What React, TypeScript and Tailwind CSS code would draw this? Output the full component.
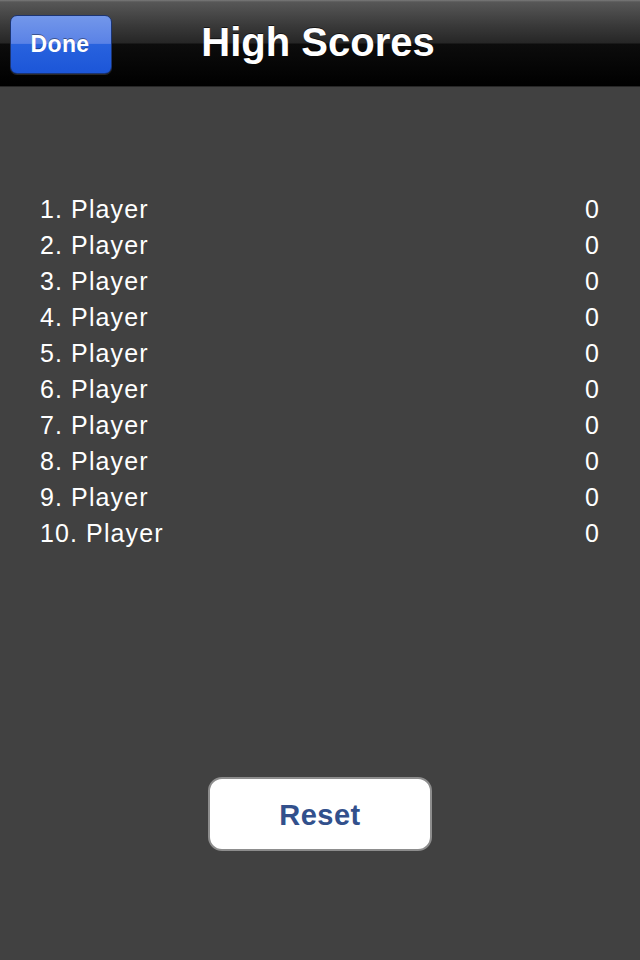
import React from "react";

export default function App() {
  const rows = Array.from({ length: 10 }, (_, i) => i + 1);
  return (
    <div
      className="w-[640px] h-[960px] bg-[#414141] flex flex-col"
      style={{ fontFamily: '"Liberation Sans", Arial, sans-serif' }}
    >
      <div className="relative h-[87px] shrink-0 flex items-center justify-center border-b border-[#262626] bg-[linear-gradient(to_bottom,#7a7a7a_0px,#575757_2px,#3a3a3a_25px,#262626_43px,#0c0c0c_44px,#000000_86px)]">
        <button className="absolute left-[10px] top-[15px] w-[102px] h-[59px] rounded-[7px] border border-[#1c3470] bg-[linear-gradient(to_bottom,#7397ea_0%,#5a82e6_48%,#2862de_50%,#1c56d8_100%)] shadow-[0_1px_0_rgba(255,255,255,0.15)] flex items-center justify-center">
          <span className="text-white font-bold text-[23px] tracking-[0.4px] -ml-[2px] [text-shadow:0_-1px_0_rgba(0,0,0,0.4)]">Done</span>
        </button>
        <h1 className="text-white font-bold text-[40px] leading-none -mt-[3px] -ml-[4px] [text-shadow:0_-1px_0_rgba(0,0,0,0.6)]">
          High Scores
        </h1>
      </div>
      <div className="pt-[104px] pl-[40px] pr-[41px] flex flex-col">
        {rows.map((n) => (
          <div key={n} className="flex justify-between h-[36px] items-center text-[25px] tracking-[1.1px] text-white leading-none">
            <span>{n}. Player</span>
            <span className="tracking-normal">0</span>
          </div>
        ))}
      </div>
      <div className="flex justify-center pt-[226px]">
        <button className="w-[224px] h-[74px] rounded-[14px] bg-white border-2 border-[#8d8d8d] flex items-center justify-center">
          <span className="text-[#32508c] font-bold text-[29px] tracking-[0.5px] mt-[3px]">Reset</span>
        </button>
      </div>
    </div>
  );
}
